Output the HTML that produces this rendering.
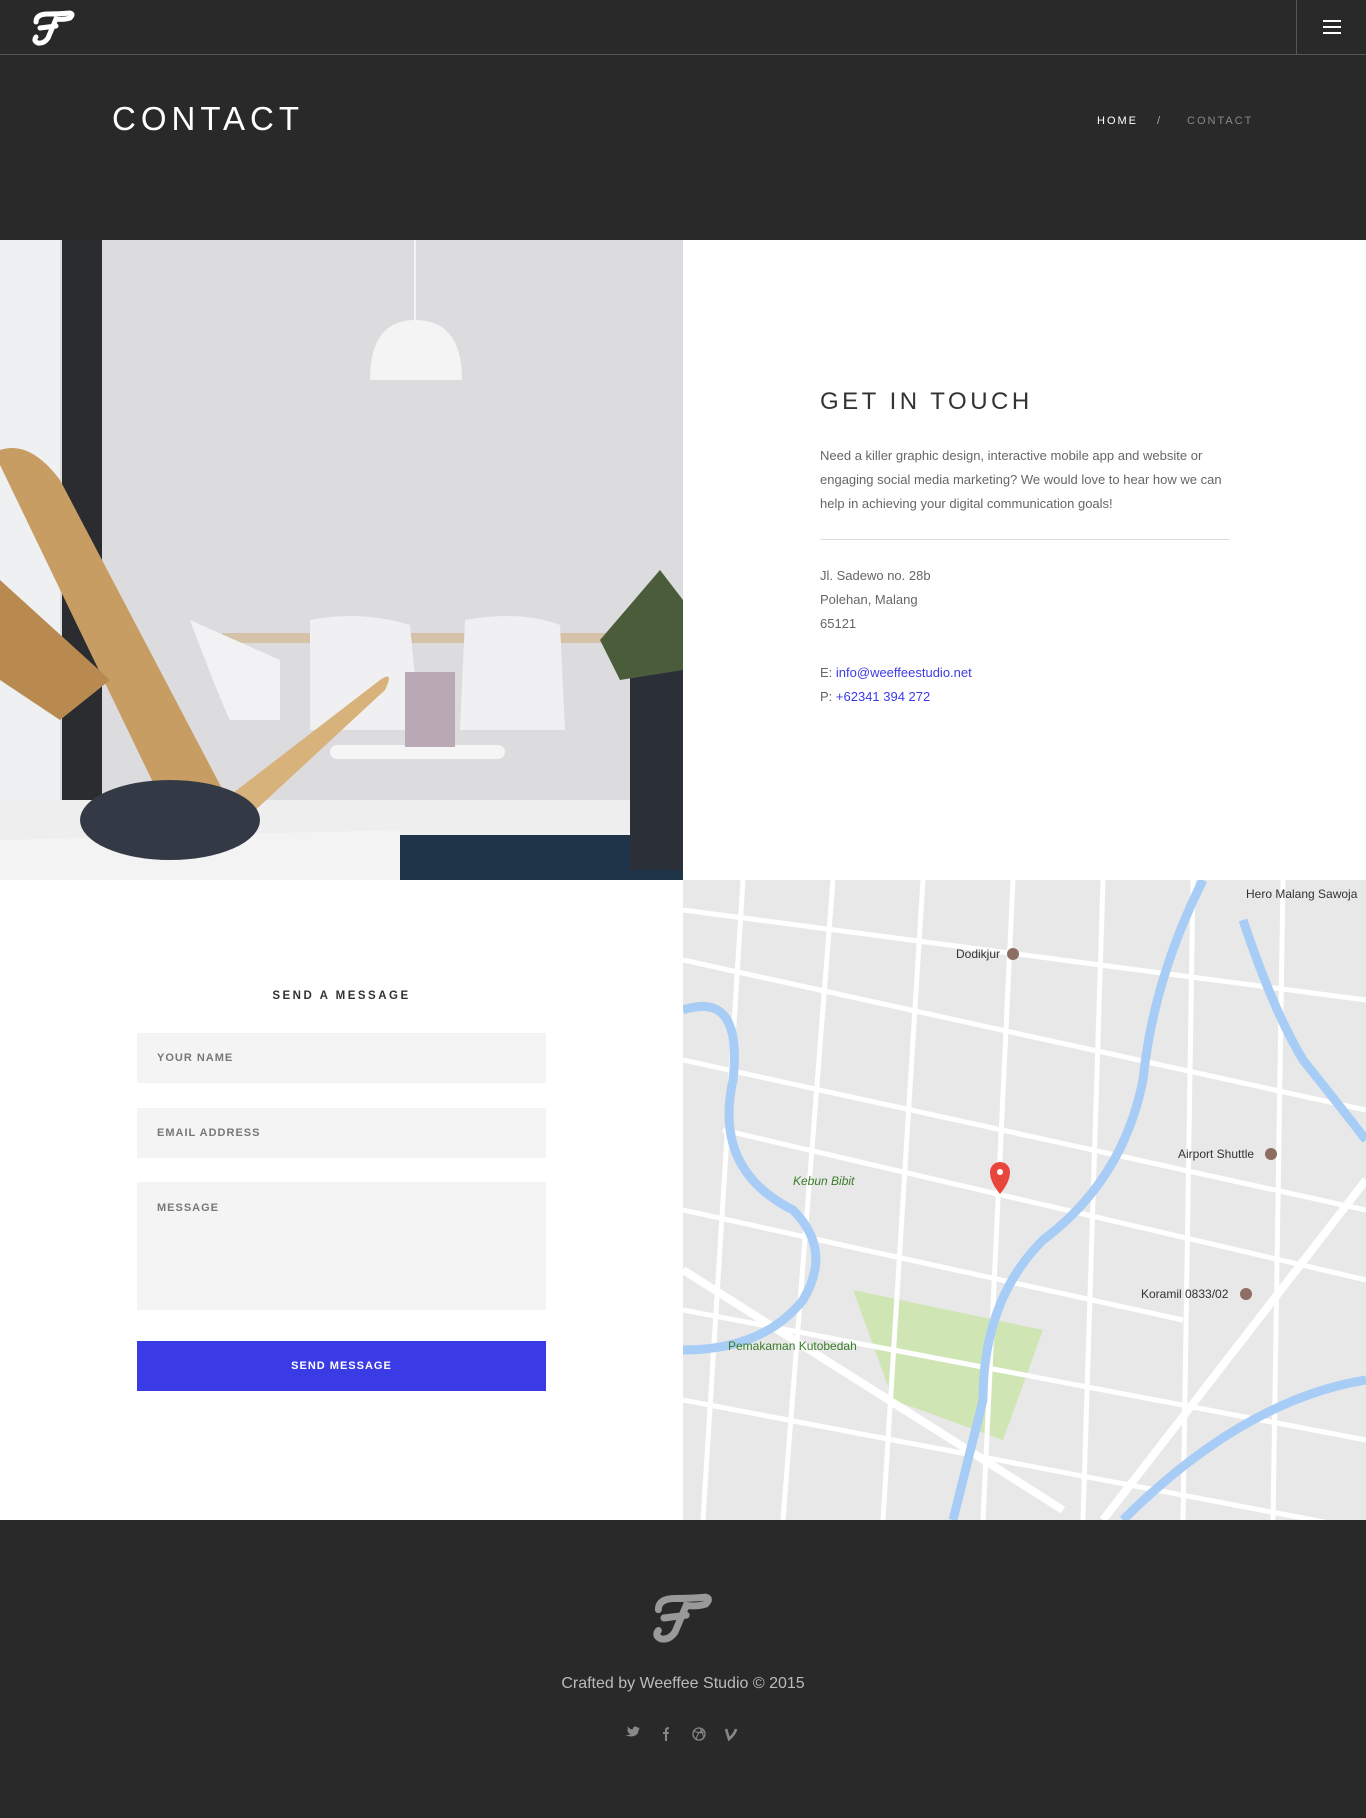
<!DOCTYPE html>
<html><head><meta charset="utf-8"><style>
*{margin:0;padding:0;box-sizing:border-box}
body{width:1366px;height:1818px;font-family:"Liberation Sans",sans-serif;background:#fff;position:relative;overflow:hidden}
.abs{position:absolute}
#top{left:0;top:0;width:1366px;height:240px;background:#292929}
#hdrline{left:0;top:54px;width:1366px;height:1px;background:#555}
#vline{left:1296px;top:0;width:1px;height:54px;background:#555}
.ham{left:1323px;width:18px;height:2px;background:#fff}
h1{position:absolute;left:112px;top:100px;color:#fff;font-weight:normal;font-size:33px;letter-spacing:5px}
.bc{top:115px;font-size:11px;letter-spacing:2px}
#gt{left:820px;top:388px;font-size:24px;letter-spacing:3.5px;color:#333}
.p{left:820px;font-size:13px;color:#666;line-height:24px}
a{color:#3b3be6;text-decoration:none}
.inp{left:137px;width:409px;background:#f4f4f4;font-size:11px;font-weight:bold;color:#777;letter-spacing:1px;padding-left:20px}
#foot{left:0;top:1520px;width:1366px;height:298px;background:#292929}
</style></head><body>
<div id="top" class="abs"></div>
<div id="hdrline" class="abs"></div>
<div id="vline" class="abs"></div>
<svg class="abs" style="left:30px;top:10px" width="46" height="36" viewBox="0 0 46 36"><path d="M6 12 Q6 4 18 4 Q30 4 40 3 Q44 4 40 8 Q34 10 26 9 L18 28 Q14 34 8 33 Q3 31 6 27 M10 18 L26 16" stroke="#fff" stroke-width="5" fill="none" stroke-linecap="round"/></svg>
<div class="abs ham" style="top:20px"></div><div class="abs ham" style="top:26px"></div><div class="abs ham" style="top:32px"></div>
<h1>CONTACT</h1>
<div class="abs bc" style="left:1097px;color:#fff">HOME</div>
<div class="abs bc" style="left:1157px;color:#aaa">/</div>
<div class="abs bc" style="left:1187px;color:#888">CONTACT</div>

<svg class="abs" style="left:0;top:240px" width="683" height="640" viewBox="0 0 683 640">
<rect width="683" height="640" fill="#dcdcdf"/>
<rect x="0" y="0" width="60" height="640" fill="#eef0f2"/>
<rect x="62" y="0" width="40" height="640" fill="#2a2c30"/>
<rect x="0" y="560" width="683" height="80" fill="#eeeeee"/>
<rect x="380" y="595" width="303" height="45" fill="#1f3448"/>
<path d="M370 140 Q370 80 415 80 Q462 80 462 140 Z" fill="#f4f4f4"/><line x1="415" y1="0" x2="415" y2="80" stroke="#f4f4f4" stroke-width="2"/>
<rect x="222" y="393" width="415" height="10" fill="#d6c2a8"/>
<path d="M190 380 Q220 460 230 480 L280 480 L280 420 Z" fill="#f2f2f4"/>
<path d="M310 380 Q360 370 410 385 L420 490 L310 490 Z" fill="#f0f0f3"/>
<path d="M465 380 Q520 370 560 385 L565 490 L460 490 Z" fill="#f0f0f3"/>
<rect x="330" y="505" width="175" height="14" rx="7" fill="#f5f5f5"/>
<rect x="405" y="432" width="50" height="75" fill="#b9a9b4"/>
<rect x="630" y="430" width="53" height="200" fill="#2b3038"/>
<path d="M600 400 L660 330 L683 360 L683 430 L620 440 Z" fill="#4a5c3a"/>
<path d="M0 225 L200 640 L270 640 L60 240 Q30 200 0 210 Z" fill="#c79d63"/>
<path d="M120 640 L380 440 Q395 430 385 450 L180 640 Z" fill="#d7b27a"/>
<path d="M0 340 L110 440 L60 480 L0 440 Z" fill="#b88a50"/>
<path d="M0 600 L400 590 L400 640 L0 640 Z" fill="#f3f3f3"/>
<ellipse cx="170" cy="580" rx="90" ry="40" fill="#333a45"/>
</svg>

<div id="gt" class="abs">GET IN TOUCH</div>
<div class="abs p" style="top:444px;width:412px">Need a killer graphic design, interactive mobile app and website or engaging social media marketing? We would love to hear how we can help in achieving your digital communication goals!</div>
<div class="abs" style="left:820px;top:539px;width:409px;height:1px;background:#ddd"></div>
<div class="abs p" style="top:564px">Jl. Sadewo no. 28b<br>Polehan, Malang<br>65121</div>
<div class="abs p" style="top:661px">E: <a>info@weeffeestudio.net</a><br>P: <a>+62341 394 272</a></div>

<div class="abs" style="left:0;width:683px;text-align:center;top:990px;font-size:11.5px;font-weight:bold;letter-spacing:2.5px;color:#333">SEND A MESSAGE</div>
<div class="abs inp" style="top:1033px;height:50px;line-height:50px">YOUR NAME</div>
<div class="abs inp" style="top:1108px;height:50px;line-height:50px">EMAIL ADDRESS</div>
<div class="abs inp" style="top:1182px;height:128px;padding-top:20px">MESSAGE</div>
<div class="abs" style="left:137px;top:1341px;width:409px;height:50px;line-height:50px;background:#3b3be6;color:#fff;text-align:center;font-size:11px;font-weight:bold;letter-spacing:1px">SEND MESSAGE</div>

<svg class="abs" style="left:683px;top:880px" width="683" height="640" viewBox="0 0 683 640">
<rect width="683" height="640" fill="#e8e8e8"/>
<path d="M170 410 L360 450 L320 560 L210 520 Z" fill="#cfe6b4"/>
<g stroke="#fff" stroke-width="5" fill="none">
<path d="M0 80 L683 230 M0 180 L683 330 M40 250 L683 400 M0 330 L500 440 M60 0 L20 640 M150 0 L100 640 M240 0 L200 640 M330 0 L300 640 M420 0 L400 640 M510 0 L500 640 M600 0 L590 640 M0 430 L683 560 M0 520 L683 650 M0 30 L683 120"/>
</g>
<g stroke="#fff" stroke-width="8" fill="none"><path d="M0 390 L380 630 M683 300 L420 640"/></g>
<g stroke="#a7cdf6" stroke-width="9" fill="none">
<path d="M0 130 Q60 110 50 200 Q30 290 110 330 Q150 370 120 420 Q80 470 0 470"/>
<path d="M520 0 Q470 100 460 200 Q440 300 360 360 Q300 420 300 520 Q280 600 270 640"/>
<path d="M440 640 Q560 520 683 500"/>
<path d="M560 40 Q590 130 620 180 Q660 230 683 260"/>
</g>
<path d="M307 292 a10 10 0 1 1 20 0 q0 10 -10 22 q-10 -12 -10 -22z" fill="#e8453c"/>
<circle cx="317" cy="292" r="3" fill="#fff"/>
<g font-family="Liberation Sans" font-size="12" fill="#333">
<text x="273" y="78">Dodikjur</text><text x="563" y="18">Hero Malang Sawoja</text>
<text x="495" y="278">Airport Shuttle</text><text x="458" y="418">Koramil 0833/02</text>
<text x="110" y="305" fill="#3a7d2a" font-style="italic">Kebun Bibit</text>
<text x="45" y="470" fill="#3a7d2a">Pemakaman Kutobedah</text>
</g>
<g fill="#8d6e63"><circle cx="330" cy="74" r="6"/><circle cx="588" cy="274" r="6"/><circle cx="563" cy="414" r="6"/></g>
</svg>

<div id="foot" class="abs"></div>
<svg class="abs" style="left:650px;top:1591px" width="64" height="54" viewBox="0 0 46 36"><path d="M6 12 Q6 4 18 4 Q30 4 40 3 Q44 4 40 8 Q34 10 26 9 L18 28 Q14 34 8 33 Q3 31 6 27 M10 18 L26 16" stroke="#999" stroke-width="5" fill="none" stroke-linecap="round"/></svg>
<div class="abs" style="left:0;top:1675px;width:1366px;text-align:center;color:#bbb;font-size:16px">Crafted by Weeffee Studio © 2015</div>
<svg class="abs" style="left:620px;top:1724px" width="130" height="20">
<g fill="#888" stroke="#888">
<path d="M4 14 Q9 15 12 12 Q9 12 8 10 L10 10 Q7 9 7 6 L9 7 Q7 4 8 2 Q11 6 15 6 Q15 2 19 2 Q21 2 22 4 L24 3 L23 5 L25 5 L23 7 Q23 15 13 16 Q8 16 4 14Z" stroke="none" transform="translate(2,1) scale(0.72)"/>
<path d="M45 17 V10 H43 V8 H45 V6 Q45 3 49 3 V5 Q47 5 47 6.5 V8 H49 L48.7 10 H47 V17 Z" stroke="none"/>
<circle cx="79" cy="10" r="6" fill="none" stroke-width="1.3"/>
<path d="M74 7 Q80 10 84 8 M76 15 Q78 8 83 6 M80 4 Q83 10 84 14" fill="none" stroke-width="1"/>
<path d="M106 5 L109 15 Q115 10 116 5" fill="none" stroke-width="2.6"/></g></svg>
</body></html>
